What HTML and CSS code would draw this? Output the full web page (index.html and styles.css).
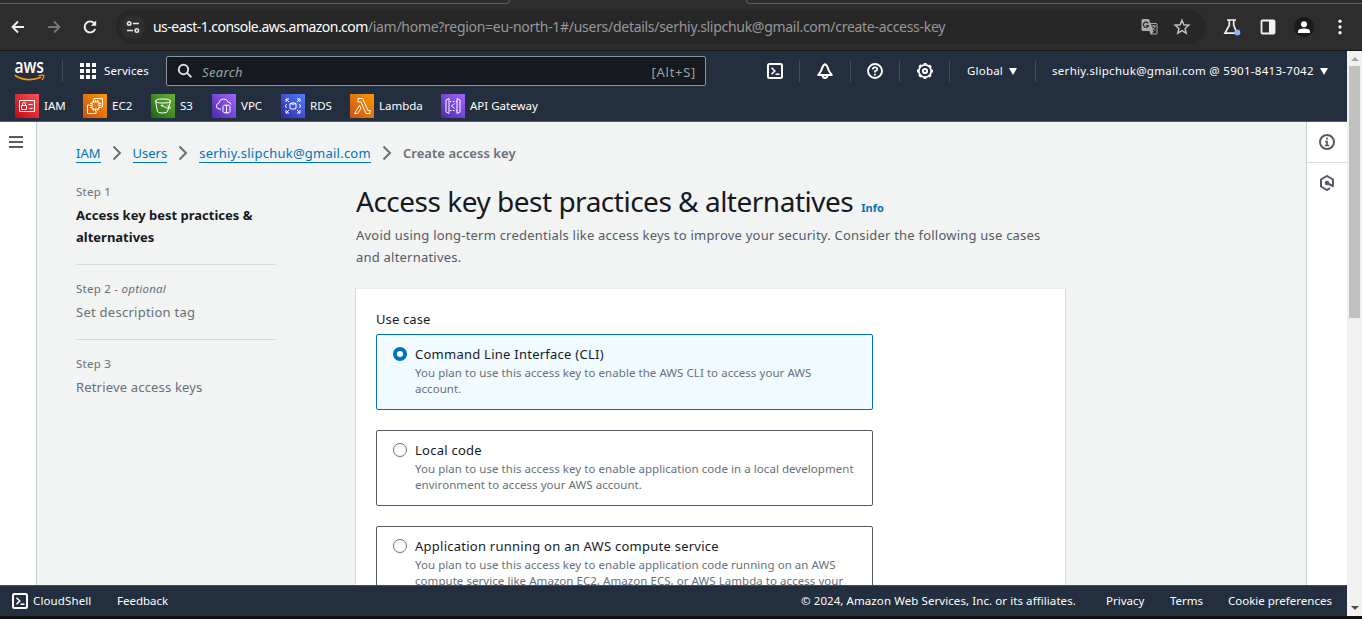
FILE: index.html
```html
<!DOCTYPE html>
<html lang="en">
<head>
<meta charset="utf-8">
<title>Create access key | IAM</title>
<link rel="stylesheet" href="styles.css">
</head>
<body>
<div class="window">
  <div class="toolbar">
    <div class="tab-edge"><i class="edge-left"></i><i class="edge-right"></i></div>
    <div class="toolbar-row">
      <svg class="nav-icon" viewBox="0 0 16 16" fill="none" stroke="#f1f1f1" stroke-width="1.9"><path d="M14 8H3M8 2.5 2.5 8 8 13.5"/></svg>
      <svg class="nav-icon" viewBox="0 0 16 16" fill="none" stroke="#777" stroke-width="1.9"><path d="M2 8h11M8 2.5 13.500 8 8 13.500"/></svg>
      <svg class="nav-icon" viewBox="0 0 16 16" fill="none" stroke="#f1f1f1" stroke-width="1.9"><path d="M13.200 10A5.500 5.500 0 1 1 12.300 4.300L13 5.200"/><path d="M14.200 1.500v5.300H8.900z" fill="#f1f1f1" stroke="none"/></svg>
      <div class="omnibox">
        <span class="site-info"><svg width="14" height="14" viewBox="0 0 14 14" fill="none" stroke="#e8e8e8" stroke-width="1.600"><circle cx="3.200" cy="3.500" r="1.700"/><path d="M7 3.500h6M1 10.500h6"/><circle cx="10.800" cy="10.500" r="1.700"/></svg></span>
        <span class="url"><span class="url-host">us-east-1.console.aws.amazon.com</span><span class="url-path">/iam/home?region=eu-north-1#/users/details/serhiy.slipchuk@gmail.com/create-access-key</span></span>
        <svg class="translate" width="18" height="18" viewBox="0 0 18 18"><path d="M2 1h6l1.500 4H15a1.500 1.500 0 0 1 1.500 1.500V15A1.500 1.500 0 0 1 15 16.500H9.500L8.500 13H2A1.500 1.500 0 0 1 .5 11.500v-9A1.500 1.500 0 0 1 2 1z" fill="#aaa"/><path d="M10 6h5.500v9.500H11l1.500-2z" fill="#292929"/><path d="M7.200 5.300A2.600 2.600 0 1 0 7.500 7.500H5" fill="none" stroke="#292929" stroke-width="1.200"/><path d="M10.500 8h4.500M12.500 7v1M14 8q-.5 2.500-3 4M11.200 9.500l3 3" fill="none" stroke="#aaa"/></svg>
        <svg class="star" width="18" height="18" viewBox="0 0 18 18" fill="none" stroke="#c0c0c0" stroke-width="1.500"><path d="m9 2.300 1.900 4.500 4.900.4-3.700 3.200 1.100 4.800L9 12.700l-4.200 2.500 1.100-4.800-3.700-3.200 4.900-.4z"/></svg>
      </div>
      <svg class="labs" width="18" height="18" viewBox="0 0 18 18"><path d="M4 2h9M6.300 2v5.200L2 15.200h12L10.700 7.200V2" fill="none" stroke="#f1f1f1" stroke-width="1.700"/><circle cx="14.300" cy="14.600" r="3" fill="#8ab4f8"/></svg>
      <svg class="panel" width="16" height="16" viewBox="0 0 16 16"><rect x="1.500" y="1.500" width="13" height="13" rx="1" fill="none" stroke="#f1f1f1" stroke-width="1.800"/><path d="M9 1h6v14H9z" fill="#f1f1f1"/></svg>
      <svg class="profile" width="20" height="20" viewBox="0 0 20 20"><circle cx="10" cy="10" r="10" fill="#1b1b1b"/><circle cx="10" cy="7.200" r="3" fill="#fff"/><path d="M4 16v-1.500q0-3 6-3t6 3V16z" fill="#fff"/></svg>
      <svg class="kebab" width="4" height="16" viewBox="0 0 4 16" fill="#f1f1f1"><circle cx="2" cy="2.300" r="1.700"/><circle cx="2" cy="8" r="1.700"/><circle cx="2" cy="13.700" r="1.700"/></svg>
    </div>
  </div>

  <div class="viewport">
    <div class="console">
      <header class="header">
        <div class="header-row">
          <div class="logo-cell">
            <svg class="logo" width="32" height="24" viewBox="0 0 32 24"><text class="logo-text" x="0.500" y="13.500" textLength="29.500" lengthAdjust="spacingAndGlyphs">aws</text><path d="M.8 16.300Q13 24 27 18.300" fill="none" stroke="#f90" stroke-width="1.700"/><path d="M24.500 16.800q5-1.300 5.500-.3.300 1.400-2 4.500" fill="none" stroke="#f90" stroke-width="1.300"/></svg>
          </div>
          <div class="services">
            <svg width="16" height="16" viewBox="0 0 16 16" fill="#fff"><path d="M0 0h4v4H0zM6 0h4v4H6zM12 0h4v4h-4zM0 6h4v4H0zM6 6h4v4H6zM12 6h4v4h-4zM0 12h4v4H0zM6 12h4v4H6zM12 12h4v4h-4z"/></svg>
            <span class="t-services">Services</span>
          </div>
          <div class="search">
            <svg width="16" height="16" viewBox="0 0 16 16" fill="none" stroke="#d5dbdb" stroke-width="2"><circle cx="6.500" cy="6.500" r="4.700"/><path d="m9.900 9.900 4.500 4.300"/></svg>
            <span class="placeholder">Search</span><span class="shortcut">[Alt+S]</span>
          </div>
          <div class="tools">
            <div class="tool"><svg width="16" height="16" viewBox="0 0 16 16" fill="none" stroke="#fff" stroke-width="2"><rect x="1" y="1" width="14" height="14" rx="1.500"/><path d="m4.500 4.700 3.300 3.300-3.300 3.300M8.500 11.300h4" stroke-width="1.600"/></svg></div>
            <div class="tool tool-wide"><svg width="16" height="16" viewBox="0 0 16 16" fill="none" stroke="#fff" stroke-width="2"><path d="M8 1.200C5.500 1.700 5 6.500 3.700 8.500L1.200 12h13.600L12.300 8.500C11 6.500 10.500 1.700 8 1.200z" stroke-linejoin="round"/><path d="M5.500 12.500Q6 15 8 15t2.500-2.500" /></svg></div>
            <div class="tool tool-thin"><svg width="16" height="16" viewBox="0 0 16 16" fill="none" stroke="#fff" stroke-width="1.900"><circle cx="8" cy="8" r="7"/><path d="M5.700 6.400q0-2.100 2.300-2.100t2.300 1.900Q10.300 7.700 8 8.200v1.300" stroke-width="1.700"/><path d="M8 10.700v1.700" stroke-width="1.800"/></svg></div>
            <div class="tool"><svg width="16" height="16" viewBox="0 0 16 16" fill="none" stroke="#fff"><circle cx="8" cy="8" r="6.200" stroke-width="1.800"/><circle cx="8" cy="8" r="7.300" stroke-width="1.500" stroke-dasharray="2.860 2.870" stroke-dashoffset="1.430"/><circle cx="8" cy="8" r="2.100" stroke-width="2"/></svg></div>
            <div class="region"><span class="t-region">Global</span><i class="caret"></i></div>
            <div class="account"><span class="t-account">serhiy.slipchuk@gmail.com @ 5901-8413-7042</span><i class="caret"></i></div>
          </div>
        </div>
        <div class="favorites">
          <div class="fav"><span class="tile red"><svg viewBox="0 0 24 24"><path d="M4.500 6.500h15v11h-15zM6.500 11.500h5v4h-5zM7.500 11.500V9.700q0-1.200 1.500-1.200t1.500 1.200v1.800M13.500 10.500h4M14.500 14.500h3"/></svg></span><span class="fav-name">IAM</span></div>
          <div class="fav"><span class="tile orange"><svg viewBox="0 0 24 24"><path d="M9 8h7v7H9zM10.500 8V6M12.500 8V6M14.500 8V6M10.500 15v2M12.500 15v2M14.500 15v2M9 9.500H7M9 11.500H7M9 13.500H7M16 9.500h2M16 11.500h2M16 13.500h2M11 6V4.500h8.500V13H18M7 11H4.500v8.500H13V17"/></svg></span><span class="fav-name">EC2</span></div>
          <div class="fav"><span class="tile green"><svg viewBox="0 0 24 24"><path d="M4.500 7q0-2 7.500-2t7.500 2-7.500 2-7.500-2l2 10.500q.5 1.500 5 1.500t5-1.500L19.500 7M11 11.500q5 3.500 8.500 2.500-.5-1.500-3-2.500"/><circle cx="11" cy="11.500" r=".7"/></svg></span><span class="fav-name">S3</span></div>
          <div class="fav"><span class="tile purple"><svg viewBox="0 0 24 24"><path d="M9 15H7q-3-.5-2.500-3.500Q5 9.500 7 9q.5-4 4.500-4 3.500 0 4.500 3 2.500 0 3 2.500M11 12.500q0-1.500 3.500-1.500t3.500 1.500v5q0 1.500-3.500 1.500t-3.500-1.500zM14.500 11v8"/></svg></span><span class="fav-name">VPC</span></div>
          <div class="fav"><span class="tile blue"><svg viewBox="0 0 24 24"><path d="M5 8V5h3M5 5l3 3M16 5h3v3M19 5l-3 3M5 16v3h3M5 19l3-3M19 16v3h-3M19 19l-3-3M9 9.500q3-1.500 6 0v5q-3 1.500-6 0zM9 9.500q3 1.500 6 0M5.500 10q-2 2 0 4M18.500 10q2 2 0 4"/></svg></span><span class="fav-name">RDS</span></div>
          <div class="fav"><span class="tile orange"><svg viewBox="0 0 24 24"><path d="M8 4.500h4.500l5.500 12h2v3h-4L11 8H8zM9.500 11.500l1.500 3-3.500 5h-3z"/></svg></span><span class="fav-name">Lambda</span></div>
          <div class="fav"><span class="tile purple"><svg viewBox="0 0 24 24"><path d="M8 4.500v15l-3-1.500V6zM16 4.500v15l3-1.500V6zM13.500 9.500 10.500 12l3 2.500"/><path d="M9 7.500h7M9 16.500h7" stroke-dasharray="1.500 1.500"/></svg></span><span class="fav-name">API Gateway</span></div>
        </div>
      </header>

      <div class="body">
        <nav class="side-left"><svg width="14" height="12" viewBox="0 0 14 12" fill="#545b64"><path d="M0 0h14v2H0zM0 5h14v2H0zM0 10h14v2H0z"/></svg></nav>
        <main class="content">
          <div class="crumbs">
            <a class="crumb">IAM</a><svg class="chev" viewBox="0 0 10 16"><path d="m1.500 1.500 6.500 6.500-6.500 6.500"/></svg>
            <a class="crumb">Users</a><svg class="chev" viewBox="0 0 10 16"><path d="m1.500 1.500 6.500 6.500-6.500 6.500"/></svg>
            <a class="crumb c-mail">serhiy.slipchuk@gmail.com</a><svg class="chev" viewBox="0 0 10 16"><path d="m1.500 1.500 6.500 6.500-6.500 6.500"/></svg>
            <span class="crumb-current">Create access key</span>
          </div>
          <div class="wizard">
            <ol class="steps">
              <li class="step"><div class="step-label">Step 1</div><div class="step-name active">Access key best practices &amp;<br>alternatives</div></li>
              <li class="step"><div class="step-label">Step 2 - <em>optional</em></div><div class="step-name">Set description tag</div></li>
              <li class="step"><div class="step-label">Step 3</div><div class="step-name s3">Retrieve access keys</div></li>
            </ol>
            <section class="panel-main">
              <h1 class="title"><span class="title-text">Access key best practices &amp; alternatives</span><a class="info">Info</a></h1>
              <p class="lead">Avoid using long-term credentials like access keys to improve your security. Consider the following use cases<br>and alternatives.</p>
              <div class="card">
                <div class="field-label">Use case</div>
                <div class="option selected"><i class="radio"></i><div><div class="opt-title">Command Line Interface (CLI)</div><div class="opt-desc">You plan to use this access key to enable the AWS CLI to access your AWS<br>account.</div></div></div>
                <div class="option"><i class="radio"></i><div><div class="opt-title">Local code</div><div class="opt-desc">You plan to use this access key to enable application code in a local development<br>environment to access your AWS account.</div></div></div>
                <div class="option"><i class="radio"></i><div><div class="opt-title">Application running on an AWS compute service</div><div class="opt-desc">You plan to use this access key to enable application code running on an AWS<br>compute service like Amazon EC2, Amazon ECS, or AWS Lambda to access your</div></div></div>
              </div>
            </section>
          </div>
        </main>
        <aside class="side-right">
          <div class="side-btn"><svg width="16" height="16" viewBox="0 0 16 16" fill="none" stroke="#545b64" stroke-width="2"><circle cx="8" cy="8" r="7"/><path d="M8 3.500v2M6 7.500h2v4M5.800 11.500h4.400" stroke-width="1.700"/></svg></div>
          <div class="side-btn last"><svg width="16" height="16" viewBox="0 0 16 16" fill="none" stroke="#545b64" stroke-width="2"><path d="M11 13.200 8 15l-6-3.500v-7L8 1l6 3.500v6.300"/><circle cx="8" cy="8" r="1.300" fill="#545b64"/><path d="m8 8 6.500 3.500"/></svg></div>
        </aside>
      </div>

      <footer class="footer">
        <svg width="16" height="16" viewBox="0 0 16 16" fill="none" stroke="#fff" stroke-width="2"><rect x="1" y="1" width="14" height="14" rx="1.500"/><path d="m4.500 4.700 3.300 3.300-3.300 3.300M8.500 11.300h4" stroke-width="1.600"/></svg>
        <span class="f-cloud">CloudShell</span><span class="f-feed">Feedback</span>
        <span class="f-copy">© 2024, Amazon Web Services, Inc. or its affiliates.</span><span class="f-priv">Privacy</span><span class="f-terms">Terms</span><span class="f-cookie">Cookie preferences</span>
      </footer>
    </div>
    <div class="scrollbar"><i class="arrow-up"></i><div class="thumb"></div><i class="arrow-down"></i></div>
  </div>
  <div class="window-bottom"></div>
</div>
</body>
</html>
```
FILE: styles.css
```css
* { box-sizing: border-box; }
body { margin: 0; font-family: "Noto Sans", "Open Sans", sans-serif; font-size: 13px; color: #16191f; overflow: hidden; }
svg { display: block; flex: none; }
.window { width: 1362px; height: 619px; display: flex; flex-direction: column; overflow: hidden; white-space: nowrap; }

/* browser toolbar */
.toolbar { height: 51px; background: #2d2d2d; border-bottom: 1px solid #171717; flex: none; }
.tab-edge { height: 4px; display: flex; justify-content: space-between; }
.edge-left { width: 510px; border-bottom: 1px solid #626262; border-right: 1px solid #626262; border-bottom-right-radius: 8px; }
.edge-right { width: 616px; border-bottom: 1px solid #626262; border-left: 1px solid #626262; border-bottom-left-radius: 8px; }
.toolbar-row { height: 46px; display: flex; align-items: center; padding-left: 10px; }
.nav-icon { width: 16px; height: 16px; margin-right: 20px; }
.omnibox { width: 1090px; height: 34px; margin-left: -2px; border-radius: 17px; background: #272727; display: flex; align-items: center; padding-left: 5px; }
.site-info { width: 24px; height: 24px; border-radius: 50%; background: #2f2f2f; display: grid; place-items: center; }
.url { font-size: 14px; margin-left: 8px; width: 988px; padding-bottom: 2px; }
.url-host { color: #fff; letter-spacing: -0.530px; }
.url-path { color: #979797; letter-spacing: -0.290px; }
.star { margin-left: 14px; }
.labs { margin-left: 17px; }
.panel { margin-left: 19px; }
.profile { margin-left: 18px; }
.kebab { margin-left: 24px; }

/* page area */
.viewport { display: flex; height: 565px; flex: none; }
.console { width: 1347px; display: flex; flex-direction: column; }
.window-bottom { flex: 1; background: #11120f; }
.scrollbar { width: 15px; background: #f1f1f1; display: flex; flex-direction: column; align-items: center; }
.arrow-up { margin-top: 6px; border: 4px solid transparent; border-top: 0; border-bottom: 4px solid #a3a3a3; }
.thumb { width: 11px; height: 252px; margin-top: 5px; background: #c1c1c1; }
.arrow-down { margin-top: auto; margin-bottom: 6px; border: 4px solid transparent; border-bottom: 0; border-top: 4px solid #505050; }

/* navigation header */
.header { height: 71px; background: #232f3e; border-bottom: 1px solid #545b64; color: #fff; flex: none; font-size: 12px; }
.header-row { height: 40px; display: flex; align-items: center; }
.logo-cell { width: 63px; height: 22px; border-right: 1px solid #414d5c; padding-left: 14px; }
.logo { overflow: visible; margin-top: -1px; }
.logo-text { font-family: "Open Sans", "Noto Sans", sans-serif; font-weight: 600; font-size: 19px; fill: #fff; }
.services { width: 103px; padding-left: 17px; display: flex; align-items: center; gap: 8px; }
.t-services { font-size: 11.500px; letter-spacing: 0.120px; }
.t-services, .t-region, .t-account, .fav-name { padding-bottom: 2px; }
.search { width: 540px; height: 30px; border: 1px solid #8d9696; border-radius: 2px; background: #16191f; display: flex; align-items: center; padding: 2px 9px 0 10px; color: #95a5a6; font-size: 13px; }
.search svg { margin-top: -2px; }
.placeholder { margin-left: 9px; font-style: italic; letter-spacing: 0.350px; }
.shortcut { margin-left: auto; letter-spacing: 0.700px; }
.tools { margin-left: 44px; display: flex; align-items: center; }
.tool { width: 50px; height: 22px; border-right: 1px solid #414d5c; padding-left: 17px; display: flex; align-items: center; }
.tool-wide { width: 51px; }
.tool-thin { width: 49px; padding-left: 16px; }
.region { width: 86px; height: 22px; border-right: 1px solid #414d5c; display: flex; align-items: center; padding: 0 18px 0 17px; justify-content: space-between; font-size: 11.500px; letter-spacing: 0.200px; }
.account { width: 292px; padding-left: 16px; display: flex; align-items: center; justify-content: space-between; font-size: 11.500px; letter-spacing: 0.300px; }
.caret { border: 4.500px solid transparent; border-bottom: 0; border-top: 7px solid #fff; }
.favorites { height: 30px; padding-left: 15px; display: grid; grid-template-columns: 68px 68px 61px 69px 69px 91px auto; align-items: center; font-size: 11.500px; }
.fav { display: flex; align-items: center; gap: 5px; }
.tile { width: 24px; height: 24px; }
.tile svg { width: 24px; height: 24px; fill: none; stroke: #fff; stroke-width: 1; }
.red { background: linear-gradient(45deg, #bd0816, #ff5252); }
.orange { background: linear-gradient(45deg, #c8511b, #f90); }
.green { background: linear-gradient(45deg, #1b660f, #6cae3e); }
.purple { background: linear-gradient(45deg, #4d27aa, #a166ff); }
.blue { background: linear-gradient(45deg, #2e27ad, #527fff); }

/* body */
.body { height: 463px; display: flex; overflow: hidden; }
.side-left { width: 37px; border-right: 1px solid #c5cdcd; background: #fff; padding: 14px 0 0 9px; }
.content { width: 1269px; background: #f2f3f3; padding: 20px 0 0 39px; }
.side-right { width: 41px; border-left: 1px solid #c5cdcd; background: #fff; }
.side-btn { height: 41px; border-bottom: 1px solid #d5dbdb; display: grid; place-items: center; }
.side-btn.last { border-bottom: 0; height: 40px; }
.crumbs { height: 22px; display: flex; align-items: center; }
.crumb { color: #0073bb; border-bottom: 1px solid #0073bb; height: 20px; line-height: 20px; }
.c-mail { letter-spacing: 0.240px; }
.chev { width: 10px; height: 16px; margin: 0 11px; fill: none; stroke: #687078; stroke-width: 2; }
.crumb-current { color: #687078; font-weight: 600; letter-spacing: 0.060px; }
.wizard { display: flex; gap: 80px; margin-top: 17px; }
.steps { width: 200px; list-style: none; margin: 0; padding: 0; }
.step { border-bottom: 1px solid #d5dbdb; padding-bottom: 16px; margin-bottom: 14px; }
.step:last-child { border: 0; }
.step-label { font-size: 11.500px; letter-spacing: 0.250px; line-height: 20px; color: #687078; padding-bottom: 2px; margin-top: 1px; }
.step-name { font-size: 13px; letter-spacing: 0.260px; line-height: 22px; color: #687078; }
.step-name.s3 { letter-spacing: 0.170px; }
.step-name.active { color: #16191f; font-weight: 700; letter-spacing: 0; }
.title { margin: 2px 0 0; height: 36px; line-height: 36px; font-size: 28px; font-weight: 400; display: flex; align-items: baseline; }
.title-text { letter-spacing: -0.490px; }
.info { margin-left: 8px; color: #0073bb; font-size: 11px; font-weight: 700; }
.lead { margin: 5px 0 0; font-size: 13px; line-height: 22px; letter-spacing: 0.217px; color: #545b64; }
.card { width: 711px; height: 340px; margin: 20px 0 0 -1px; background: #fff; border: 1px solid #d5dbdb; border-top-color: #eaeded; padding: 19px 20px; }
.field-label { line-height: 22px; margin-bottom: 4px; letter-spacing: 0.120px; }
.option { width: 497px; height: 76px; border: 1px solid #545b64; border-radius: 2px; padding: 8px 16px; display: flex; gap: 8px; margin-bottom: 20px; }
.selected { border-color: #0073bb; background: #f1faff; }
.radio { width: 14px; height: 14px; border: 1px solid #687078; border-radius: 50%; margin-top: 4px; background: #fff; flex: none; }
.selected .radio { border: 4px solid #0073bb; }
.opt-title { font-size: 13px; line-height: 22px; letter-spacing: 0.250px; }
.opt-desc { font-size: 11.500px; line-height: 16px; letter-spacing: 0.050px; color: #687078; }

/* footer */
.footer { height: 31px; background: #232f3e; border-top: 1px solid #414d5c; color: #fff; display: flex; align-items: center; padding: 0 16px 0 12px; font-size: 11.500px; }
.footer span { padding-bottom: 2px; }
.f-cloud { margin-left: 5px; width: 84px; letter-spacing: 0.120px; }
.f-copy { margin-left: auto; width: 305px; letter-spacing: 0.080px; }
.f-priv { width: 64px; }
.f-terms { width: 58px; }
.f-cookie { width: 103px; }
```
